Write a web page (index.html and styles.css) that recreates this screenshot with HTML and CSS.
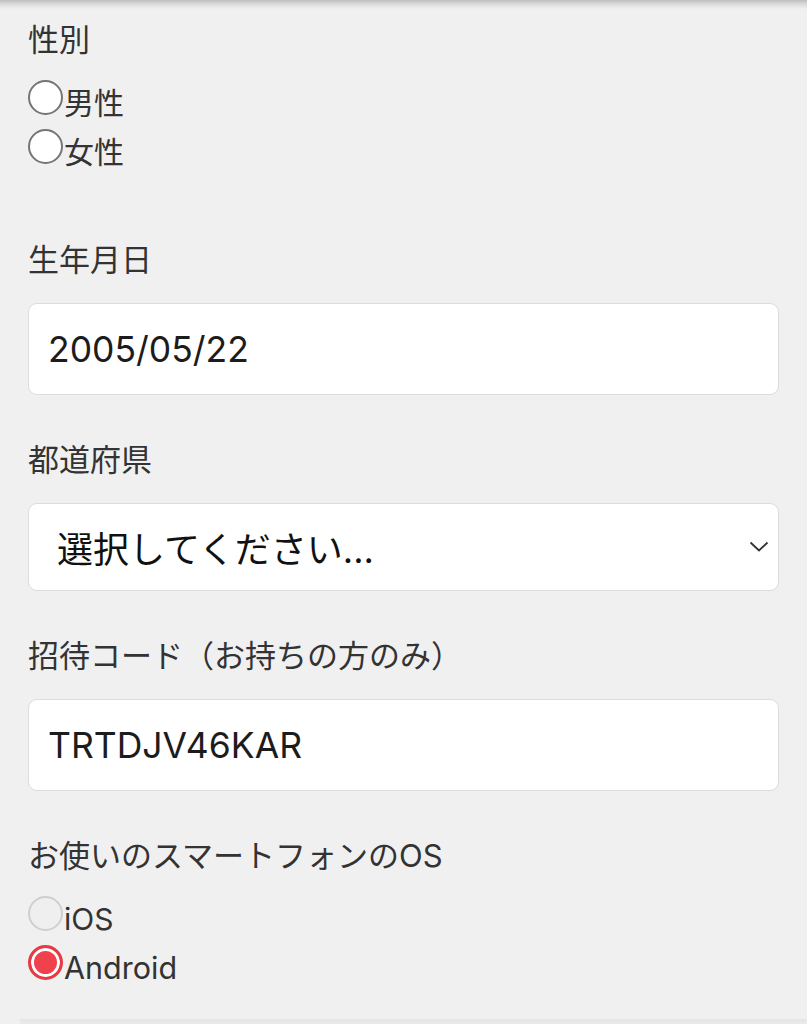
FILE: index.html
```html
<!DOCTYPE html>
<html lang="ja">
<head>
<meta charset="utf-8">
<link rel="stylesheet" href="styles.css">
</head>
<body>
<div class="topshadow"></div>
<form class="form">
  <div class="field field-radio">
    <div class="label">性別</div>
    <div class="radios">
      <label class="radio"><span class="dot"></span><span class="rtext">男性</span></label>
      <label class="radio"><span class="dot"></span><span class="rtext">女性</span></label>
    </div>
  </div>
  <div class="field">
    <div class="label">生年月日</div>
    <div class="box box-input">2005/05/22</div>
  </div>
  <div class="field">
    <div class="label">都道府県</div>
    <div class="box box-select"><span class="select-text">選択してください...</span>
      <svg class="chev" width="20" height="12" viewBox="0 0 20 12"><path d="M1.5 1.5 L10 9.5 L18.5 1.5" fill="none" stroke="#333" stroke-width="1.8"/></svg>
    </div>
  </div>
  <div class="field">
    <div class="label">招待コード（お持ちの方のみ）</div>
    <div class="box box-input">TRTDJV46KAR</div>
  </div>
  <div class="field field-radio">
    <div class="label">お使いのスマートフォンのOS</div>
    <div class="radios">
      <label class="radio"><span class="dot dot-disabled"></span><span class="rtext">iOS</span></label>
      <label class="radio"><span class="dot dot-checked"></span><span class="rtext rtext-latin">Android</span></label>
    </div>
  </div>
</form>
<div class="bottomline"></div>
</body>
</html>
```
FILE: styles.css
```css
html, body {
  margin: 0;
  padding: 0;
  background: #f0f0f0;
}
body {
  width: 807px;
  height: 1024px;
  overflow: hidden;
  position: relative;
  font-family: Inter, "Noto Sans CJK JP", sans-serif;
  color: #333;
}
.topshadow {
  position: absolute;
  left: 0;
  top: 0;
  width: 100%;
  height: 9px;
  background: linear-gradient(#bdbdbd, #d8d8d8 40%, #f0f0f0);
}
.form {
  padding: 20px 28px 0 28px;
  display: flex;
  flex-direction: column;
}
.field {
  display: flex;
  flex-direction: column;
  margin-bottom: 46px;
}
.field-radio {
  margin-bottom: 66px;
}
.field-radio:last-child {
  margin-bottom: 0;
}
.label {
  font-size: 31px;
  line-height: 40px;
  height: 40px;
  color: #333;
  margin-bottom: 23px;
  white-space: nowrap;
}
.field-radio .label {
  margin-bottom: 16px;
}
.radios {
  display: flex;
  flex-direction: column;
}
.radio {
  display: flex;
  align-items: center;
  height: 49px;
}
.dot {
  box-sizing: border-box;
  width: 35px;
  height: 35px;
  border-radius: 50%;
  border: 2px solid #757575;
  background: #fff;
  margin-top: -7px;
  flex: none;
}
.dot-disabled {
  border-color: #cfcfcf;
  background: #efefef;
}
.dot-checked {
  border: 3px solid #e83a44;
  background: #f0424c;
  box-shadow: inset 0 0 0 3px #fff;
}
.rtext {
  font-size: 30px;
  line-height: 40px;
  color: #333;
  margin-left: 1px;
  margin-top: 4px;
}
.rtext-latin {
  font-size: 30.5px;
}
.box {
  box-sizing: border-box;
  width: 751px;
  background: #fff;
  border: 1.5px solid #dcdcdc;
  border-radius: 9px;
  display: flex;
  align-items: center;
}
.box-input {
  height: 92px;
  padding-left: 19px;
  font-size: 35.5px;
  color: #1c1c1c;
  margin-bottom: -1px;
}
.box-select {
  height: 88px;
  padding-left: 28px;
  padding-right: 9px;
  justify-content: space-between;
  margin-bottom: -1px;
}
.select-text {
  font-size: 36px;
  color: #111;
}
.chev {
  display: block;
}
.bottomline {
  position: absolute;
  left: 20px;
  right: 0;
  top: 1019px;
  height: 5px;
  background: linear-gradient(#e4e4e4, #ebebeb);
}
```
